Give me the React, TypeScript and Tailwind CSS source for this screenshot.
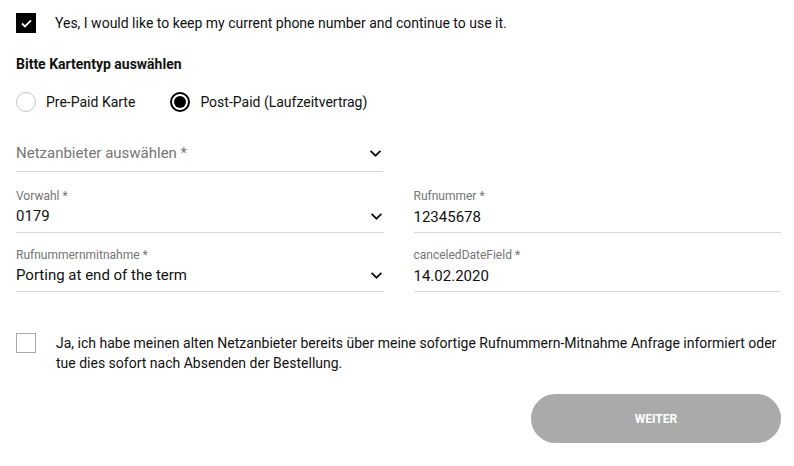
import * as React from 'react';

function Chevron() {
  return (
    <svg viewBox="0 0 14 10" className="h-[9px] w-[13px] shrink-0" fill="none">
      <path d="M1.5 2 L7 7.5 L12.5 2" stroke="#111" strokeWidth="2" />
    </svg>
  );
}

function SelectField({ label, value, placeholder }: { label?: string; value?: string; placeholder?: string }) {
  return (
    <div className={label ? 'border-b border-[#d6d6d6] pb-[4px]' : 'border-b border-[#d6d6d6] pb-[6px]'}>
      {label && <div className="text-[12px] leading-[16px] text-[#757575]">{label}</div>}
      <div className="flex items-center justify-between pr-[1px]">
        {placeholder ? (
          <span className="text-[15px] leading-[24px] text-[#767676]">{placeholder}</span>
        ) : (
          <span className="text-[15px] leading-[24px] text-[#111]">{value}</span>
        )}
        <Chevron />
      </div>
    </div>
  );
}

function TextField({ label, value }: { label: string; value: string }) {
  return (
    <div className="border-b border-[#d6d6d6] pb-[4px]">
      <div className="text-[12px] leading-[16px] text-[#757575]">{label}</div>
      <div className="pt-[2px] text-[15px] leading-[22px] text-[#111]">{value}</div>
    </div>
  );
}

export default function App() {
  return (
    <div className="w-[794px] h-[466px] bg-white px-4 pt-[13px] font-['Roboto',sans-serif] text-[#111]">
      <label className="flex items-center gap-[19px]">
        <span className="flex h-5 w-5 items-center justify-center bg-black">
          <svg viewBox="0 0 12 10" className="h-[9px] w-[11px]" fill="none">
            <path d="M1 5 L4.3 8.2 L11 1.5" stroke="#fff" strokeWidth="2" />
          </svg>
        </span>
        <span className="text-[14px] leading-[20px]">Yes, I would like to keep my current phone number and continue to use it.</span>
      </label>

      <h3 className="mt-[22px] text-[14px] font-bold leading-[18px]">Bitte Kartentyp auswählen</h3>

      <div className="mt-[19px] flex items-center">
        <label className="flex items-center gap-[10px]">
          <span className="h-5 w-5 rounded-full border border-[#c4c4c4]" />
          <span className="text-[14px] leading-[20px]">Pre-Paid Karte</span>
        </label>
        <label className="ml-[35px] flex items-center gap-[10px]">
          <span className="flex h-5 w-5 items-center justify-center rounded-full border-2 border-black">
            <span className="h-[12px] w-[12px] rounded-full bg-black" />
          </span>
          <span className="text-[14px] leading-[20px]">Post-Paid (Laufzeitvertrag)</span>
        </label>
      </div>

      <div className="mt-[29px] w-[367px]">
        <SelectField placeholder="Netzanbieter auswählen *" />
      </div>

      <div className="mt-[16px] grid grid-cols-2 gap-x-[30px] gap-y-[14px] w-[765px]">
        <SelectField label="Vorwahl *" value="0179" />
        <TextField label="Rufnummer *" value="12345678" />
        <SelectField label="Rufnummernmitnahme *" value="Porting at end of the term" />
        <TextField label="canceledDateField *" value="14.02.2020" />
      </div>

      <label className="mt-[41px] flex items-start gap-[20px]">
        <span className="mt-0 h-5 w-5 shrink-0 border border-[#a8a8a8]" />
        <span className="text-[14px] leading-[20px] w-[725px]">
          Ja, ich habe meinen alten Netzanbieter bereits über meine sofortige Rufnummern-Mitnahme Anfrage informiert oder tue dies sofort nach Absenden der Bestellung.
        </span>
      </label>

      <div className="mt-[21px] flex justify-end w-[765px]">
        <button className="h-[49px] w-[250px] rounded-full bg-[#aaaaaa] text-[12px] font-bold text-white">
          WEITER
        </button>
      </div>
    </div>
  );
}
